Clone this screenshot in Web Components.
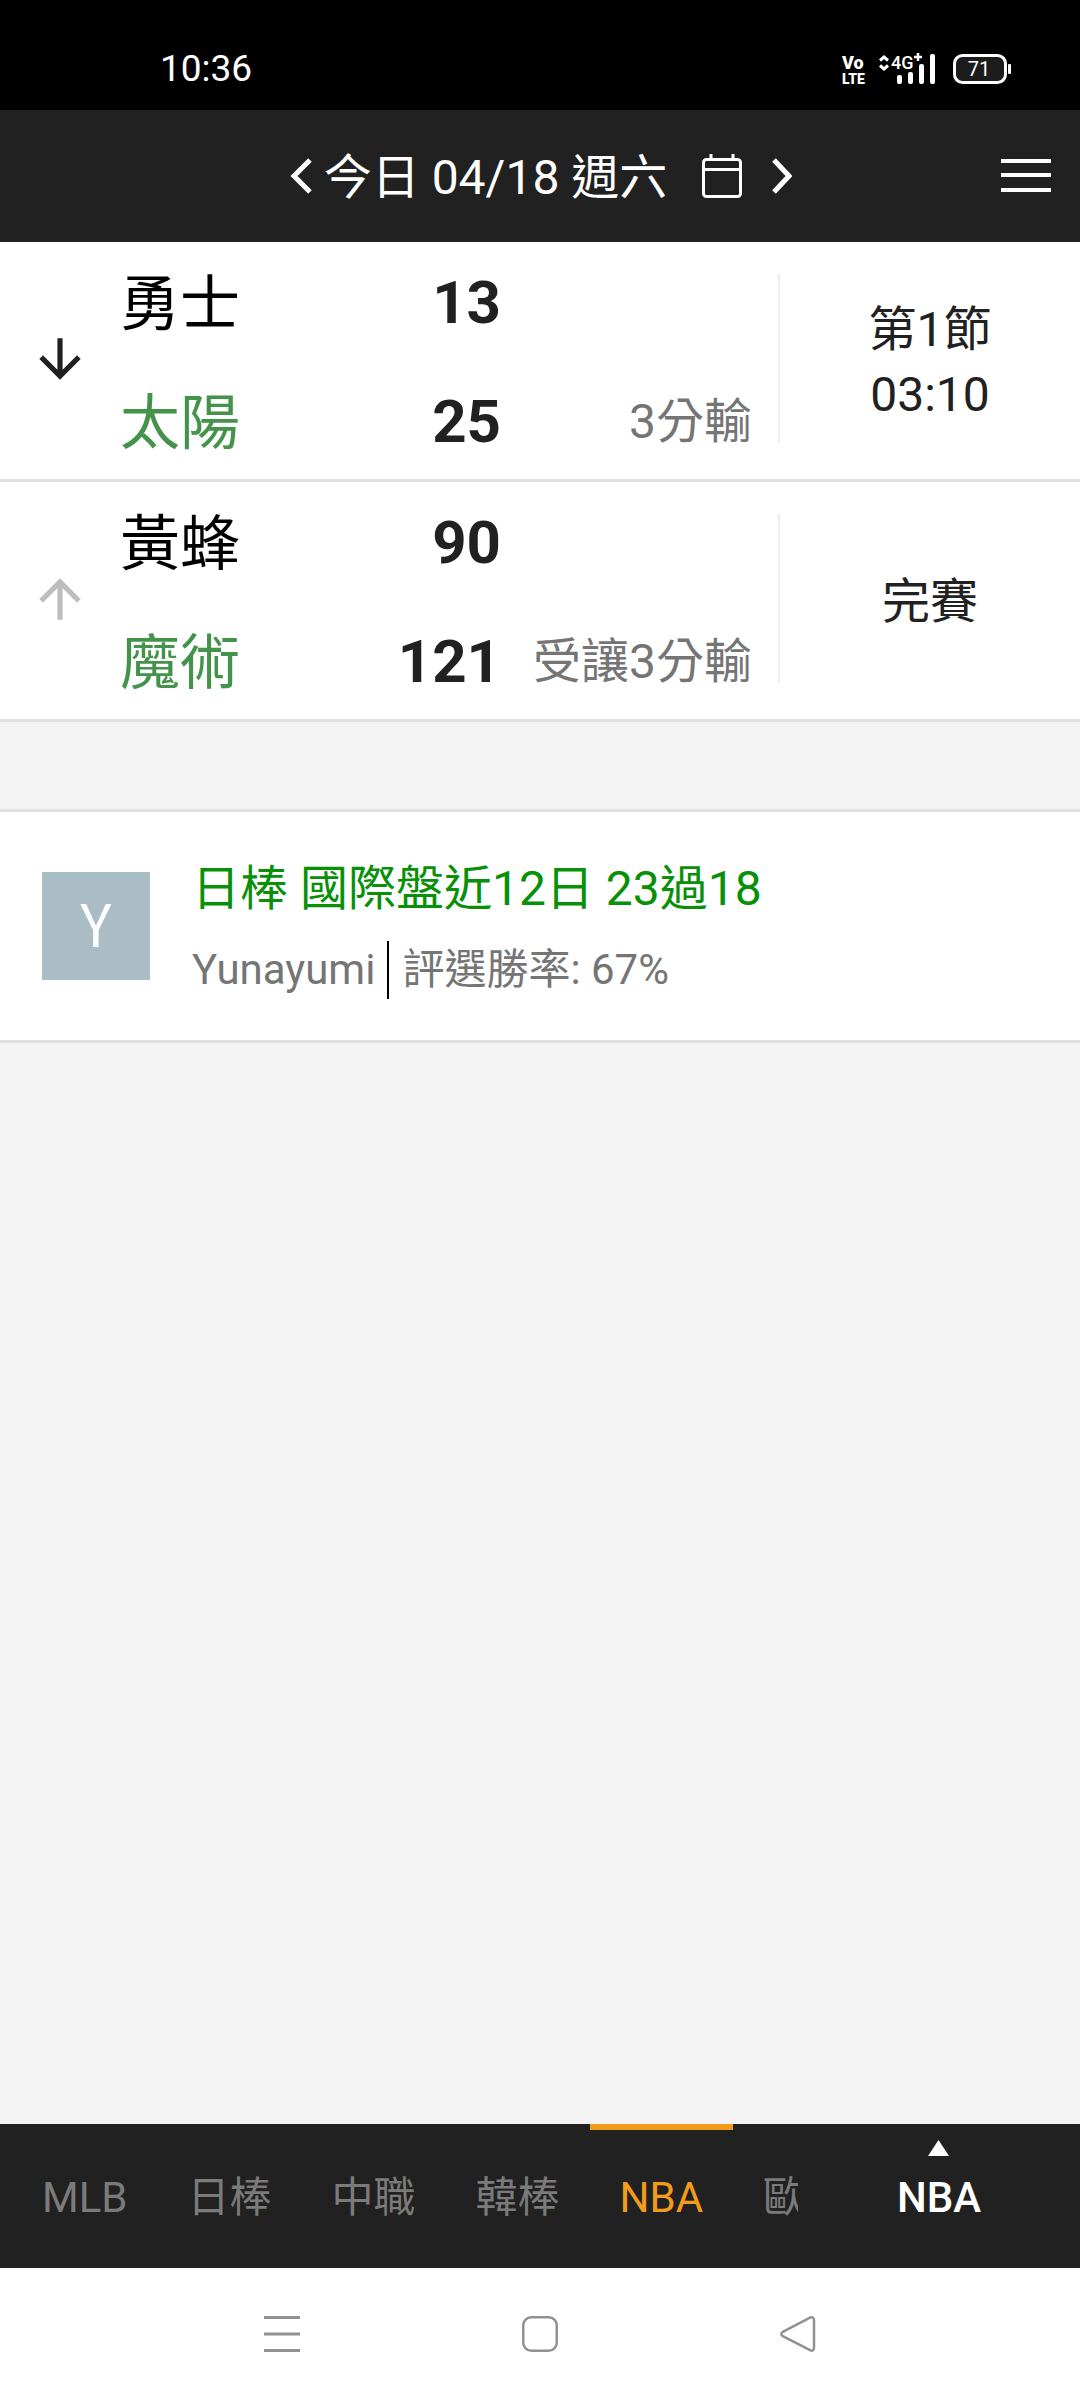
<!DOCTYPE html>
<html lang="zh-Hant">
<head>
<meta charset="utf-8">
<meta name="viewport" content="width=device-width, initial-scale=1">
<title>NBA 04/18</title>
<style>
html, body { margin: 0; }
body { font-family: Roboto, "Noto Sans CJK TC", sans-serif; background: #f3f3f3; color: #212121; }
</style>
</head>
<body>
<score-app></score-app>
<script>
const define = (name, html) => {
  const template = document.createElement('template');
  template.innerHTML = `<style>
    :host { display: block; box-sizing: border-box; }
    *, *::before, *::after { box-sizing: border-box; }
    button { font: inherit; color: inherit; background: none; border: 0; margin: 0; padding: 0; cursor: pointer; }
    svg { display: block; flex: none; }
  </style>` + html;
  customElements.define(name, class extends HTMLElement {
    constructor() {
      super();
      this.attachShadow({ mode: 'open' }).append(template.content.cloneNode(true));
    }
  });
};

define('status-bar', `
<style>
  :host { display: flex; justify-content: space-between; align-items: center; height: 110px; padding: 28px 68px 0 160px; background: #000; color: #fff; }
  time { font-size: 37px; line-height: 48px; }
  text { font-family: Roboto, sans-serif; }
</style>
<time>10:36</time>
<svg width="172" height="36" viewBox="0 0 172 36" fill="#fff">
  <text x="2" y="18" font-size="18" font-weight="900">Vo</text>
  <text x="2" y="33" font-size="14" font-weight="900">LTE</text>
  <path d="M40 9.500l4-3.500 4 3.500M40 14.500l4 3.500 4-3.500" fill="none" stroke="#fff" stroke-width="3"/>
  <text x="51" y="18" font-size="18" font-weight="500">4G</text>
  <path d="M78 2v8M74 6h8" stroke="#fff" stroke-width="2.500"/>
  <rect x="57" y="24" width="5" height="9" rx="2"/>
  <rect x="68" y="21" width="5" height="12" rx="2"/>
  <rect x="79" y="13" width="5" height="20" rx="2"/>
  <rect x="90" y="3" width="5" height="30" rx="2"/>
  <rect x="114.500" y="4.500" width="51" height="27" rx="8" fill="#1c1c1c" stroke="#fff" stroke-width="3"/>
  <rect x="168" y="13" width="3" height="10" rx="1"/>
  <text x="139" y="25" font-size="20" text-anchor="middle">71</text>
</svg>`);

define('date-header', `
<style>
  :host { display: grid; grid-template-columns: 1fr auto 1fr; align-items: center; height: 132px; background: #212121; color: #fff; }
  .picker { grid-column: 2; display: flex; align-items: center; }
  .date { display: flex; align-items: center; gap: 35px; margin: 0 30px 0 12px; font-size: 48px; line-height: 60px; }
  .label { padding-top: 4px; }
  .menu { justify-self: end; padding: 0 29px; }
</style>
<div class="picker">
  <button aria-label="前一天"><svg width="24" height="36" viewBox="0 0 24 36" fill="none" stroke="#fff" stroke-width="5"><path d="M22 2L6 18l16 16"/></svg></button>
  <button class="date"><span class="label"><slot></slot></span><svg width="40" height="46" viewBox="0 0 40 46" fill="none" stroke="#fff" stroke-width="3"><rect x="1.500" y="6.500" width="37" height="37" rx="3"/><path d="M1.500 16.500h37M9 1v6M31 1v6"/></svg></button>
  <button aria-label="後一天"><svg width="20" height="36" viewBox="0 0 20 36" fill="none" stroke="#fff" stroke-width="5"><path d="M2 2l15 16L2 34"/></svg></button>
</div>
<button class="menu" aria-label="選單"><svg width="50" height="34" viewBox="0 0 50 34" fill="#fff"><path d="M0 0h50v4H0zM0 14h50v4H0zM0 29h50v4H0z"/></svg></button>`);

define('game-row', `
<style>
  :host { display: grid; grid-template-columns: 120px minmax(0, 1fr) 302px; height: 240px; background: #fff; border-bottom: 3px solid #e0e0e0; }
  .arrow { display: flex; align-items: center; justify-content: center; padding-bottom: 4px; color: #212121; }
  :host([finished]) .arrow { color: #bdbdbd; }
  :host([finished]) .arrow svg { transform: rotate(180deg); }
  .teams { display: grid; grid-template-rows: 1fr 1fr; }
  .team { display: grid; grid-template-columns: 180px 201px minmax(0, 1fr); align-items: center; padding-top: 4px; line-height: 72px; }
  .name { padding-top: 4px; font-size: 60px; color: #000; }
  .home .name { color: #43934a; }
  .score { font-size: 60px; font-weight: 700; text-align: right; }
  .odds { font-size: 48px; color: #757575; text-align: right; padding-right: 26px; white-space: nowrap; }
  .state { display: flex; flex-direction: column; justify-content: center; text-align: center; margin: 32px 0 36px; padding-top: 6px; border-left: 2px solid #eee; font-size: 48px; line-height: 65px; }
</style>
<div class="arrow"><svg width="62" height="62" viewBox="0 0 24 24" fill="currentColor"><path d="M20 12l-1.410-1.410L13 16.170V4h-2v12.170l-5.580-5.590L4 12l8 8 8-8z"/></svg></div>
<div class="teams">
  <div class="team"><span class="name"><slot name="away"></slot></span><span class="score"><slot name="away-score"></slot></span></div>
  <div class="team home"><span class="name"><slot name="home"></slot></span><span class="score"><slot name="home-score"></slot></span><span class="odds"><slot name="odds"></slot></span></div>
</div>
<div class="state"><slot name="state"></slot></div>`);

define('tip-card', `
<style>
  :host { display: flex; align-items: center; gap: 42px; height: 234px; margin-top: 87px; padding: 0 42px; background: #fff; border: solid #e0e0e0; border-width: 3px 0; }
  .avatar { display: grid; place-items: center; flex: none; width: 108px; height: 108px; padding-bottom: 8px; background: #aabdc5; color: #fff; font: 58px/72px "Noto Sans CJK TC", sans-serif; }
  .body { display: grid; gap: 22px; padding-top: 6px; }
  .title { font-size: 48px; line-height: 60px; color: #089008; }
  .by { display: flex; align-items: center; font-size: 42px; line-height: 58px; color: #757575; }
  .rate { margin-left: 12px; padding-left: 13px; border-left: 2px solid #000; }
</style>
<div class="avatar"><slot name="initial"></slot></div>
<div class="body">
  <div class="title"><slot name="title"></slot></div>
  <div class="by"><slot name="author"></slot><span class="rate"><slot name="rate"></slot></span></div>
</div>`);

define('league-tabs', `
<style>
  :host { display: flex; height: 144px; background: #212121; color: #7b7b7b; font-size: 42px; line-height: 54px; }
  .scroller { display: flex; flex: 1; min-width: 0; padding-left: 12px; overflow: hidden; }
  .current { position: relative; flex: 0 0 282px; padding-top: 4px; color: #fff; font-weight: 500; }
  .current svg { position: absolute; top: 16px; left: 50%; margin-left: -11px; }
</style>
<div class="scroller"><slot></slot></div>
<button class="current"><svg width="21" height="16" viewBox="0 0 21 16" fill="#fff"><path d="M10.500 0L21 16H0z"/></svg><slot name="current"></slot></button>`);

define('league-tab', `
<style>
  :host { flex: none; display: flex; }
  button { padding: 4px 30px 0; border: solid transparent; border-width: 6px 0; white-space: nowrap; }
  :host([active]) button { color: #f39c1b; border-top-color: #f39c1b; }
</style>
<button><slot></slot></button>`);

define('system-nav', `
<style>
  :host { display: flex; justify-content: center; height: 132px; background: #fff; }
  button { flex: 0 1 258px; display: flex; align-items: center; justify-content: center; }
</style>
<button aria-label="最近使用"><svg width="36" height="36" viewBox="0 0 36 36" fill="#919191"><path d="M0 0h36v3H0zM0 16.500h36v3H0zM0 33h36v3H0z"/></svg></button>
<button aria-label="首頁"><svg width="36" height="36" viewBox="0 0 36 36" fill="none" stroke="#919191" stroke-width="2.500"><rect x="1.250" y="1.250" width="33.500" height="33.500" rx="8"/></svg></button>
<button aria-label="返回"><svg width="36" height="36" viewBox="0 0 36 36" fill="none" stroke="#919191" stroke-width="2.500"><path d="M30 1.600L2.800 15.800c-2 1.200-2 3.200 0 4.400L30 34.200c2 1 4 .2 4-2.200V4c0-2.400-2-3.400-4-2.400z"/></svg></button>`);

define('score-app', `
<style>
  :host { display: flex; flex-direction: column; min-height: 100vh; }
  main { flex: 1; }
  .state { display: block; }
</style>
<status-bar></status-bar>
<date-header>今日 04/18 週六</date-header>
<main>
  <game-row>
    <span slot="away">勇士</span><span slot="away-score">13</span>
    <span slot="home">太陽</span><span slot="home-score">25</span>
    <span slot="odds">3分輸</span>
    <span class="state" slot="state">第1節</span><span class="state" slot="state">03:10</span>
  </game-row>
  <game-row finished>
    <span slot="away">黃蜂</span><span slot="away-score">90</span>
    <span slot="home">魔術</span><span slot="home-score">121</span>
    <span slot="odds">受讓3分輸</span>
    <span class="state" slot="state">完賽</span>
  </game-row>
  <tip-card>
    <span slot="initial">Y</span>
    <span slot="title">日棒 國際盤近12日 23過18</span>
    <span slot="author">Yunayumi</span>
    <span slot="rate">評選勝率: 67%</span>
  </tip-card>
</main>
<league-tabs>
  <league-tab>MLB</league-tab><league-tab>日棒</league-tab><league-tab>中職</league-tab><league-tab>韓棒</league-tab><league-tab active>NBA</league-tab><league-tab>歐</league-tab>
  <span slot="current">NBA</span>
</league-tabs>
<system-nav></system-nav>`);
</script>
</body>
</html>
